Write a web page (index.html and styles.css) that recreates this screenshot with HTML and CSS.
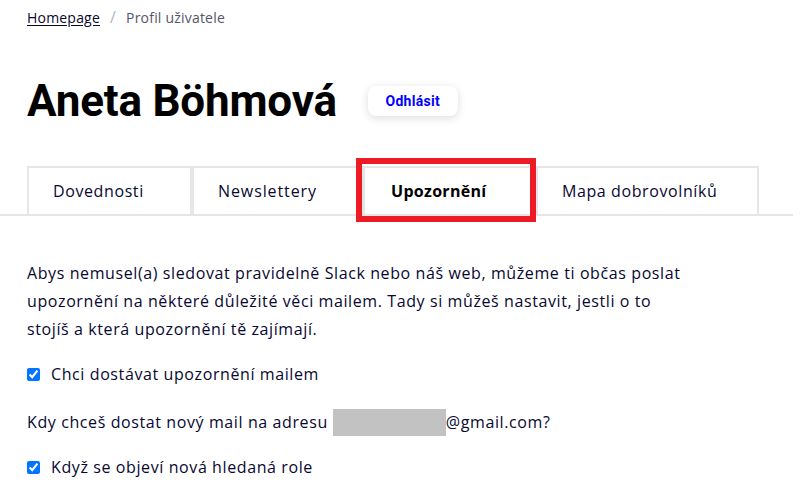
FILE: index.html
```html
<!DOCTYPE html>
<html lang="cs">
<head>
<meta charset="utf-8">
<title>Profil uživatele</title>
<link rel="stylesheet" href="styles.css">
</head>
<body>
<div class="page">
  <nav class="crumbs">
    <a class="crumb-link" href="#">Homepage</a>
    <span class="crumb-sep">/</span>
    <span class="crumb-current">Profil uživatele</span>
  </nav>
  <header class="title-row">
    <h1 class="title">Aneta Böhmová</h1>
    <button class="logout">Odhlásit</button>
  </header>
  <div class="tabs">
    <div class="tab tab-1">Dovednosti</div>
    <div class="tab tab-2">Newslettery</div>
    <div class="tab tab-3 active">Upozornění<span class="highlight"></span></div>
    <div class="tab tab-4">Mapa dobrovolníků</div>
  </div>
  <section class="content">
    <p class="intro">Abys nemusel(a) sledovat pravidelně Slack nebo náš web, můžeme ti občas poslat upozornění na některé důležité věci mailem. Tady si můžeš nastavit, jestli o to stojíš a která upozornění tě zajímají.</p>
    <label class="check"><input type="checkbox" checked><span>Chci dostávat upozornění mailem</span></label>
    <p class="mail">Kdy chceš dostat nový mail na adresu <span class="redact"></span>@gmail.com?</p>
    <label class="check"><input type="checkbox" checked><span>Když se objeví nová hledaná role</span></label>
  </section>
</div>
</body>
</html>
```

FILE: styles.css
```css
html, body {
  margin: 0;
  padding: 0;
  background: #ffffff;
}
body {
  font-family: "Open Sans", "Noto Sans", sans-serif;
  color: #080831;
  overflow: hidden;
}
.page {
  width: 803px;
  height: 493px;
}
.crumbs {
  display: flex;
  align-items: center;
  gap: 10px;
  padding: 5px 0 0 27px;
  height: 24px;
  font-size: 14px;
  letter-spacing: 0.2px;
}
.crumb-link {
  color: #080831;
  text-decoration: underline;
  text-underline-offset: 2px;
}
.crumb-sep {
  color: #b3b3bd;
  font-size: 16px;
}
.crumb-current {
  color: #55556a;
}
.title-row {
  display: flex;
  align-items: center;
  gap: 31px;
  padding: 46px 0 0 27px;
  height: 52px;
}
.title {
  margin: 0;
  font-family: Roboto, "Liberation Sans", sans-serif;
  font-weight: 700;
  font-size: 44px;
  letter-spacing: -0.2px;
  color: #000;
  line-height: 52px;
}
.logout {
  width: 90px;
  height: 30px;
  border: none;
  border-radius: 8px;
  background: #fff;
  box-shadow: 0 2px 8px rgba(8, 8, 49, 0.14);
  color: #0000ff;
  font-family: Roboto, sans-serif;
  font-weight: 700;
  font-size: 14px;
  letter-spacing: 0.3px;
  padding: 0;
}
.tabs {
  display: flex;
  margin-top: 39px;
  padding-left: 27px;
  width: 766px;
  border-bottom: 2px solid #e6e6e6;
}
.tab {
  position: relative;
  box-sizing: border-box;
  height: 48px;
  display: flex;
  align-items: center;
  padding-left: 24px;
  border: 2px solid #e6e6e6;
  border-bottom: none;
  font-size: 16px;
  letter-spacing: 0.6px;
  color: #080831;
}
.tab-1 { width: 165px; }
.tab-2 { width: 171px; letter-spacing: 0.9px; }
.tab-3 { width: 173px; padding-left: 26px; letter-spacing: 0.3px; }
.tab-4 { width: 223px; }
.tab.active {
  font-weight: 700;
  color: #000;
}
.highlight {
  position: absolute;
  left: -9px;
  top: -10px;
  width: 180px;
  height: 64px;
  box-sizing: border-box;
  border: 6px solid #ed1c24;
}
.content {
  padding: 0 0 0 27px;
  font-size: 16px;
  letter-spacing: 0.6px;
}
.intro {
  margin: 43px 0 0 0;
  width: 670px;
  line-height: 28px;
}
.check {
  display: flex;
  align-items: center;
  gap: 11px;
  margin-top: 19px;
  line-height: 24px;
}
.check input {
  margin: 0;
  width: 13px;
  height: 13px;
}
.mail {
  margin: 22px 0 0 0;
  line-height: 28px;
  display: flex;
  align-items: center;
}
.redact {
  display: inline-block;
  width: 113px;
  height: 27px;
  margin-left: 5px;
  background: #c2c2c2;
}
```
